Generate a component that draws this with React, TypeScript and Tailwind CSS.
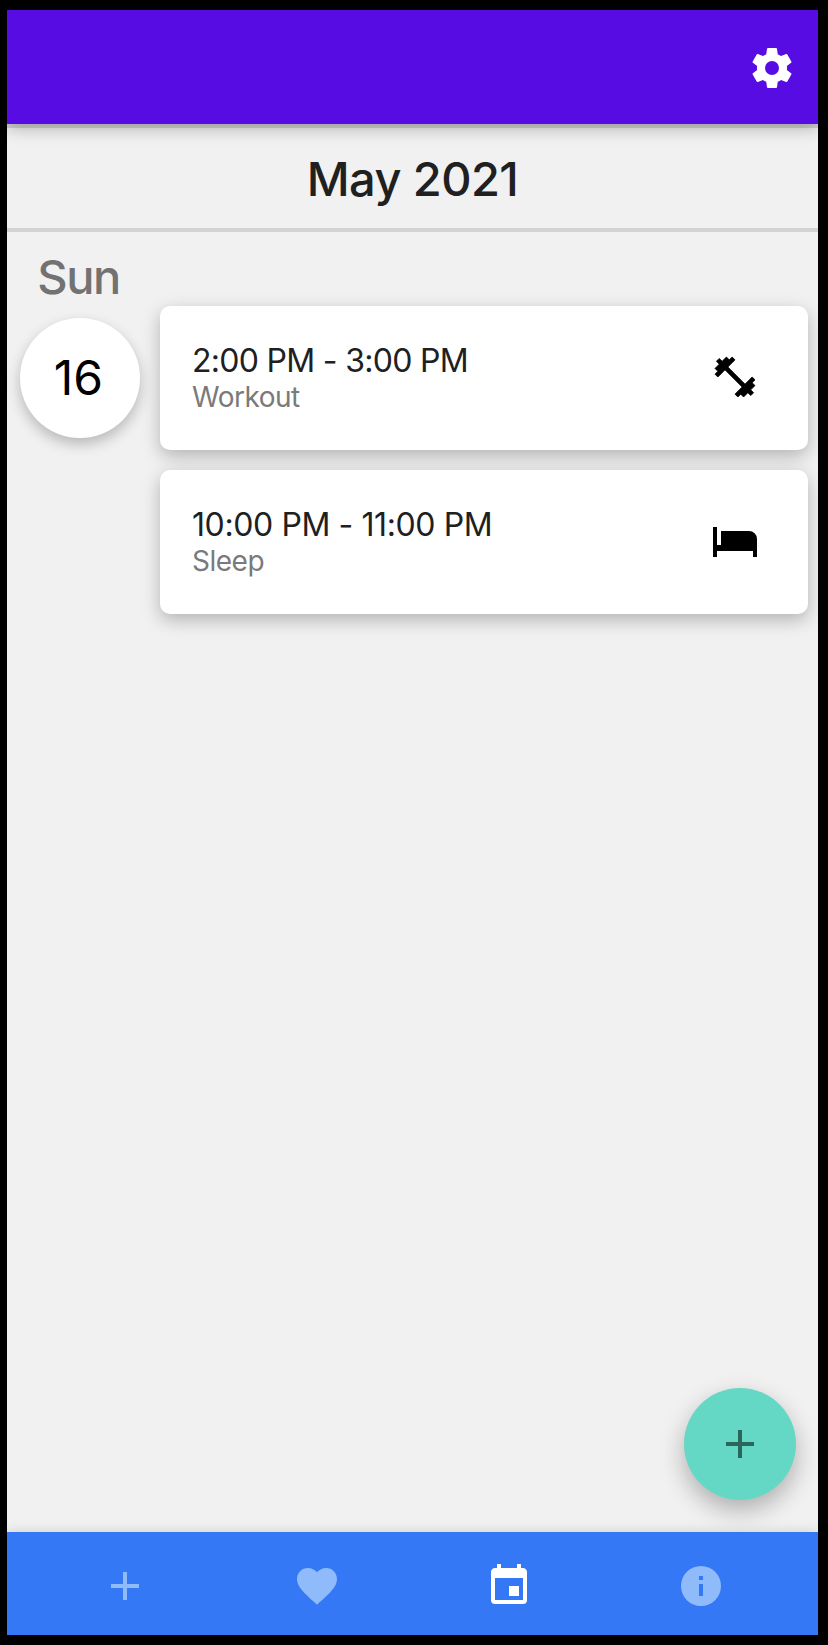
import React from "react";

type IconProps = { d: string; className?: string };

function Icon({ d, className = "" }: IconProps) {
  return (
    <svg viewBox="0 0 24 24" className={`block size-12 shrink-0 ${className}`} fill="currentColor" aria-hidden="true">
      <path d={d} />
    </svg>
  );
}

const cog =
  "M12,15.5A3.5,3.5 0 0,1 8.5,12A3.5,3.5 0 0,1 12,8.5A3.5,3.5 0 0,1 15.5,12A3.5,3.5 0 0,1 12,15.5M19.43,12.97C19.47,12.65 19.5,12.33 19.5,12C19.5,11.67 19.47,11.34 19.43,11L21.54,9.37C21.73,9.22 21.78,8.95 21.66,8.73L19.66,5.27C19.54,5.05 19.27,4.96 19.05,5.05L16.56,6.05C16.04,5.66 15.5,5.32 14.87,5.07L14.5,2.42C14.46,2.18 14.25,2 14,2H10C9.75,2 9.54,2.18 9.5,2.42L9.13,5.07C8.5,5.32 7.96,5.66 7.44,6.05L4.95,5.05C4.73,4.96 4.46,5.05 4.34,5.27L2.34,8.73C2.21,8.95 2.27,9.22 2.46,9.37L4.57,11C4.53,11.34 4.5,11.67 4.5,12C4.5,12.33 4.53,12.65 4.57,12.97L2.46,14.63C2.27,14.78 2.21,15.05 2.34,15.27L4.34,18.73C4.46,18.95 4.73,19.03 4.95,18.95L7.44,17.94C7.96,18.34 8.5,18.68 9.13,18.93L9.5,21.58C9.54,21.82 9.75,22 10,22H14C14.25,22 14.46,21.82 14.5,21.58L14.87,18.93C15.5,18.67 16.04,18.34 16.56,17.94L19.05,18.95C19.27,19.03 19.54,18.95 19.66,18.73L21.66,15.27C21.78,15.05 21.73,14.78 21.54,14.63L19.43,12.97Z";
const dumbbell =
  "M20.57,14.86L22,13.43L20.57,12L17,15.57L8.43,7L12,3.43L10.57,2L9.14,3.43L7.71,2L5.57,4.14L4.14,2.71L2.71,4.14L4.14,5.57L2,7.71L3.43,9.14L2,10.57L3.43,12L7,8.43L15.57,17L12,20.57L13.43,22L14.86,20.57L16.29,22L18.43,19.86L19.86,21.29L21.29,19.86L19.86,18.43L22,16.29L20.57,14.86Z";
const bed = "M19,7H5V14H3V5H1V20H3V17H21V20H23V11A4,4 0 0,0 19,7";
const plus = "M19,13H13V19H11V13H5V11H11V5H13V11H19V13Z";
const heart =
  "M12,21.35L10.55,20.03C5.4,15.36 2,12.27 2,8.5C2,5.41 4.42,3 7.5,3C9.24,3 10.91,3.81 12,5.08C13.09,3.81 14.76,3 16.5,3C19.58,3 22,5.41 22,8.5C22,12.27 18.6,15.36 13.45,20.03L12,21.35Z";
const calendar =
  "M19,19H5V8H19M16,1V3H8V1H6V3H5C3.89,3 3,3.89 3,5V19A2,2 0 0,0 5,21H19A2,2 0 0,0 21,19V5C21,3.89 20.1,3 19,3H18V1M17,12H12V17H17V12Z";
const info =
  "M13,9H11V7H13M13,17H11V11H13M12,2A10,10 0 0,0 2,12A10,10 0 0,0 12,22A10,10 0 0,0 22,12A10,10 0 0,0 12,2Z";

const events = [
  {
    time: "2:00 PM - 3:00 PM",
    title: "Workout",
    icon: dumbbell,
    tracking: "tracking-[-0.7px]",
    iconClass: "stroke-current stroke-[0.4] [stroke-linejoin:round]",
  },
  { time: "10:00 PM - 11:00 PM", title: "Sleep", icon: bed, tracking: "tracking-[-0.4px]", iconClass: "" },
];

const tabs = [
  { name: "Add", icon: plus, active: false },
  { name: "Favorites", icon: heart, active: false },
  { name: "Calendar", icon: calendar, active: true },
  { name: "Info", icon: info, active: false },
];

export default function App() {
  return (
    <div className="h-[1645px] w-[828px] bg-black pt-[10px] pr-[10px] pb-[10px] pl-[7px] font-['Inter',sans-serif]">
      <div className="relative flex h-full flex-col overflow-hidden bg-[#f1f1f1]">
        <header className="z-10 flex h-[114px] shrink-0 items-center justify-end bg-[#570ce3] pt-[2px] pr-[22px] text-white shadow-[0_4px_16px_rgba(0,0,0,0.28)]">
          <button aria-label="Settings">
            <Icon d={cog} />
          </button>
        </header>
        <div className="flex h-[108px] shrink-0 items-center justify-center border-y-4 border-[#d3d3d3] pt-[2px]">
          <h1 className="text-[47px] font-medium tracking-[-0.6px] text-[#202020]">May 2021</h1>
        </div>

        <main className="flex flex-1 pt-[14px]">
          <div className="flex w-[153px] shrink-0 flex-col pl-[13px]">
            <div className="flex h-[72px] w-[120px] items-center justify-center pr-[3px] pb-[10px] text-[47px] font-medium tracking-[-1.5px] text-[#727272]">
              Sun
            </div>
            <div className="flex size-[120px] items-center justify-center rounded-full bg-white pr-[3px] text-[48px] text-black shadow-[0_6px_14px_rgba(0,0,0,0.24)]">
              16
            </div>
          </div>
          <div className="flex flex-1 flex-col gap-5 pt-[60px] pr-[10px]">
            {events.map((e) => (
              <article
                key={e.title}
                className="flex h-36 items-center justify-between rounded-[10px] bg-white pr-[49px] pl-8 shadow-[0_6px_18px_rgba(0,0,0,0.26)]"
              >
                <div className="flex flex-col pt-[1px]">
                  <div className={`text-[32px] leading-[37px] text-[#202020] ${e.tracking}`}>{e.time}</div>
                  <div className="text-[28px] leading-[36px] tracking-[-0.5px] text-[#7a7a7a]">{e.title}</div>
                </div>
                <Icon d={e.icon} className={`mb-[2px] text-black ${e.iconClass}`} />
              </article>
            ))}
          </div>
        </main>

        <button
          aria-label="New event"
          className="absolute right-[22px] bottom-[135px] flex size-28 items-center justify-center rounded-full bg-[#65d8c5] text-[#2a665c] shadow-[0_10px_24px_rgba(0,0,0,0.28)]"
        >
          <Icon d={plus} />
        </button>

        <nav className="flex h-[103px] shrink-0 items-center justify-center gap-36 bg-[#3478f6] pt-[5px] shadow-[0_0_12px_rgba(0,0,0,0.14)]">
          {tabs.map((t) => (
            <button key={t.name} aria-label={t.name} className={t.active ? "text-white" : "text-[#8fbbfa]"}>
              <Icon d={t.icon} />
            </button>
          ))}
        </nav>
      </div>
    </div>
  );
}
